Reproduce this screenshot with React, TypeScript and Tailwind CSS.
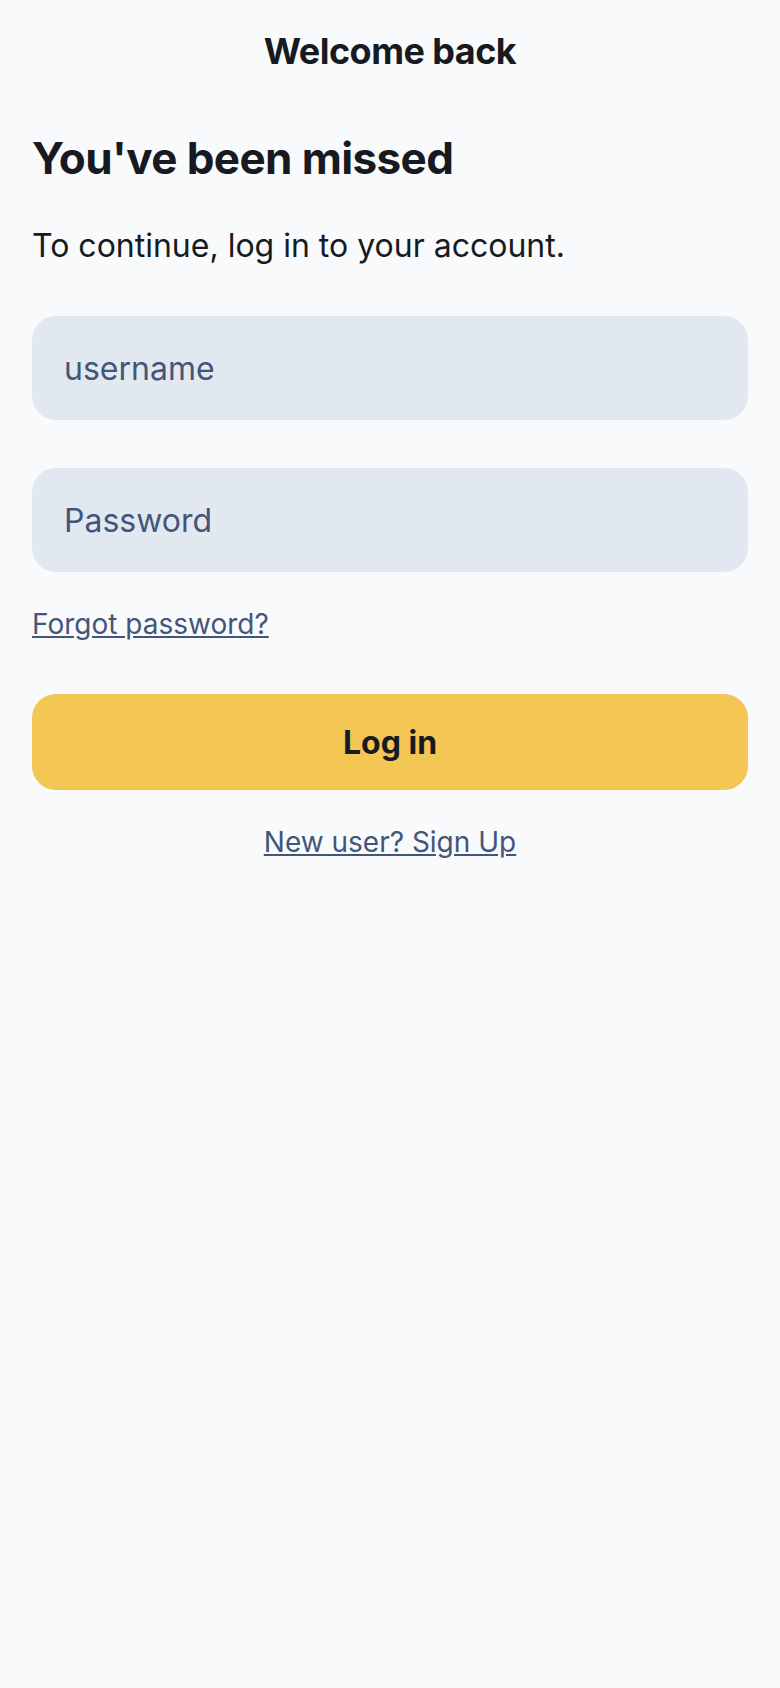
import { useState } from 'react';

export default function App() {
    const [username, setUsername] = useState('');
    const [password, setPassword] = useState('');

    return (
        <div className="min-h-screen bg-[#f8fafc] font-['Inter',sans-serif] text-[#171b21]">
            <header className="pt-[29px] text-center">
                <h1 className="text-[36px] leading-[44px] font-bold tracking-[-0.55px]">Welcome back</h1>
            </header>

            <main className="px-8 pt-[59px]">
                <h2 className="text-[44px] leading-[52px] font-bold tracking-[-0.6px]">You've been missed</h2>
                <p className="mt-10 text-[32px] leading-[44px]">To continue, log in to your account.</p>

                <form className="mt-12 flex flex-col" onSubmit={e => e.preventDefault()}>
                    <input
                        type="text"
                        value={username}
                        onChange={e => setUsername(e.target.value)}
                        placeholder="username"
                        className="h-[104px] w-full rounded-[24px] bg-[#e2e8f0] px-[32px] text-[32px] leading-[44px] text-[#171b21] outline-none placeholder:text-[#44557a]"
                    />
                    <input
                        type="password"
                        value={password}
                        onChange={e => setPassword(e.target.value)}
                        placeholder="Password"
                        className="mt-12 h-[104px] w-full rounded-[24px] bg-[#e2e8f0] px-[32px] text-[32px] leading-[44px] text-[#171b21] outline-none placeholder:text-[#44557a]"
                    />

                    <div className="mt-8">
                        <a href="#" className="text-[28px] leading-[40px] text-[#44557a] underline">
                            Forgot password?
                        </a>
                    </div>

                    <button
                        type="submit"
                        className="mt-[50px] h-[96px] w-full rounded-[24px] bg-[#f4c653] pt-[2px] text-[32px] leading-[44px] font-bold text-[#171b21]"
                    >
                        Log in
                    </button>

                    <div className="mt-8 text-center">
                        <a href="#" className="text-[28px] leading-[40px] text-[#44557a] underline">
                            New user? Sign Up
                        </a>
                    </div>
                </form>
            </main>
        </div>
    );
}
